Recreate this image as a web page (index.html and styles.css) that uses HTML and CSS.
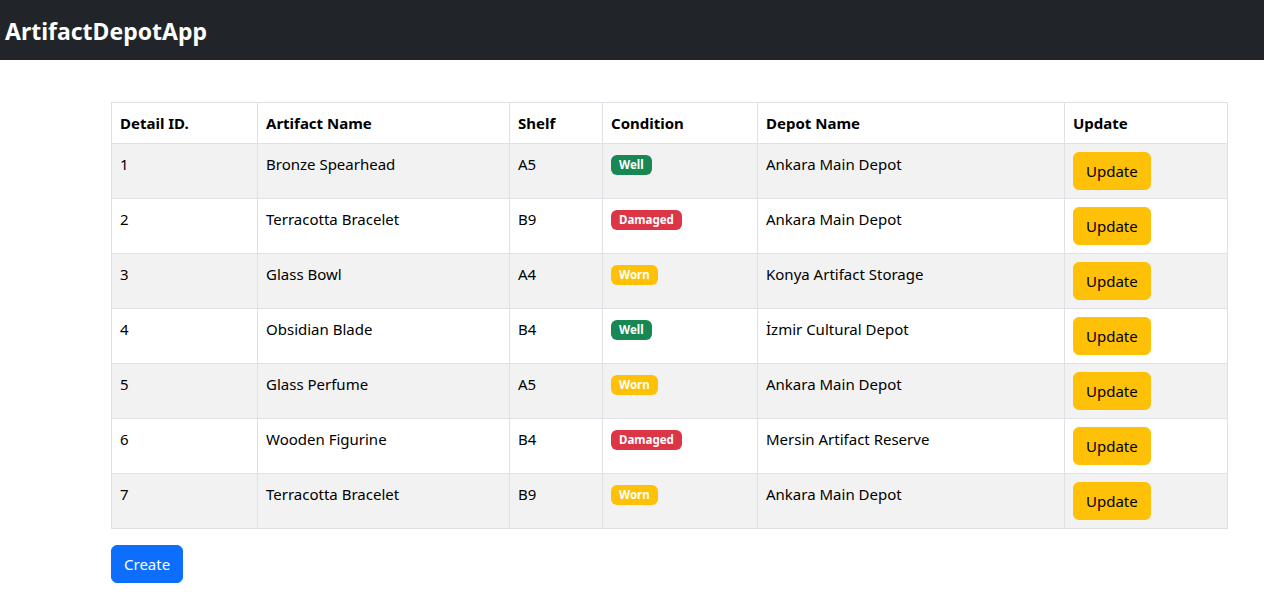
FILE: index.html
```html
<!DOCTYPE html>
<html lang="en">
<head>
<meta charset="utf-8">
<title>ArtifactDepotApp</title>
<link rel="stylesheet" href="styles.css">
</head>
<body>
<nav class="navbar">
  <span class="brand">ArtifactDepotApp</span>
</nav>
<main class="content">
  <table class="table">
    <colgroup>
      <col class="c1"><col class="c2"><col class="c3"><col class="c4"><col class="c5"><col class="c6">
    </colgroup>
    <thead>
      <tr><th>Detail ID.</th><th>Artifact Name</th><th>Shelf</th><th>Condition</th><th>Depot Name</th><th>Update</th></tr>
    </thead>
    <tbody>
      <tr class="odd"><td>1</td><td>Bronze Spearhead</td><td>A5</td><td><span class="badge well">Well</span></td><td>Ankara Main Depot</td><td><button class="btn btn-warning">Update</button></td></tr>
      <tr><td>2</td><td>Terracotta Bracelet</td><td>B9</td><td><span class="badge damaged">Damaged</span></td><td>Ankara Main Depot</td><td><button class="btn btn-warning">Update</button></td></tr>
      <tr class="odd"><td>3</td><td>Glass Bowl</td><td>A4</td><td><span class="badge worn">Worn</span></td><td>Konya Artifact Storage</td><td><button class="btn btn-warning">Update</button></td></tr>
      <tr><td>4</td><td>Obsidian Blade</td><td>B4</td><td><span class="badge well">Well</span></td><td>İzmir Cultural Depot</td><td><button class="btn btn-warning">Update</button></td></tr>
      <tr class="odd"><td>5</td><td>Glass Perfume</td><td>A5</td><td><span class="badge worn">Worn</span></td><td>Ankara Main Depot</td><td><button class="btn btn-warning">Update</button></td></tr>
      <tr><td>6</td><td>Wooden Figurine</td><td>B4</td><td><span class="badge damaged">Damaged</span></td><td>Mersin Artifact Reserve</td><td><button class="btn btn-warning">Update</button></td></tr>
      <tr class="odd"><td>7</td><td>Terracotta Bracelet</td><td>B9</td><td><span class="badge worn">Worn</span></td><td>Ankara Main Depot</td><td><button class="btn btn-warning">Update</button></td></tr>
    </tbody>
  </table>
  <button class="btn btn-primary">Create</button>
</main>
</body>
</html>
```
FILE: styles.css
```css
* { box-sizing: border-box; }
body {
  margin: 0;
  font-family: "Noto Sans", "Open Sans", sans-serif;
  font-size: 15px;
  line-height: 24px;
  color: #212529;
  background: #fff;
}
.navbar {
  height: 60px;
  background: #212529;
  display: flex;
  align-items: center;
  padding-left: 5px;
}
.brand {
  color: #fff;
  font-size: 23px;
  font-weight: 700;
  line-height: 1;
  margin-top: 2px;
}
.content {
  margin: 42px 0 0 111px;
  width: 1116px;
}
.table {
  width: 1116px;
  table-layout: fixed;
  border-collapse: collapse;
  margin-bottom: 16px;
  color: #000;
}
.c1 { width: 146px; }
.c2 { width: 252px; }
.c3 { width: 93px; }
.c4 { width: 155px; }
.c5 { width: 307px; }
.c6 { width: 163px; }
.table th, .table td {
  border: 1px solid #dee2e6;
  padding: 8px;
  text-align: left;
  vertical-align: top;
}
.table th { font-weight: 700; }
.odd td { background: #f2f2f2; }
.badge {
  display: inline-block;
  font-size: 11.5px;
  font-weight: 700;
  line-height: 12px;
  color: #fff;
  padding: 4px 8px;
  border-radius: 6px;
  vertical-align: 1px;
}
.well { background: #198754; }
.damaged { background: #dc3545; }
.worn { background: #ffc107; }
.btn {
  font-family: inherit;
  font-size: 15px;
  line-height: 24px;
  padding: 6px 12px;
  border: 1px solid transparent;
  border-radius: 6px;
  cursor: pointer;
}
.btn-warning { background: #ffc107; border-color: #ffc107; color: #000; }
.btn-primary { background: #0d6efd; border-color: #0d6efd; color: #fff; }
```
